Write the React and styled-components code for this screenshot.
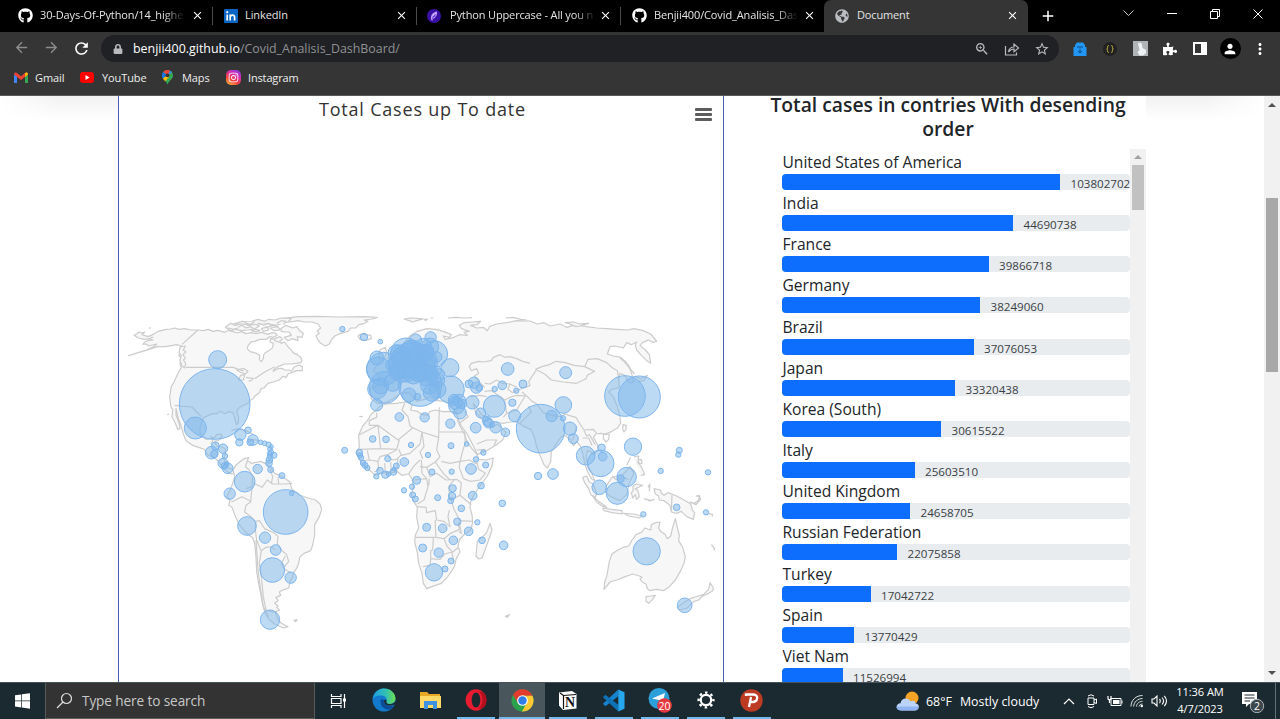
import React from "react";
import styled, { createGlobalStyle } from "styled-components";
import { FaGithub, FaInstagram, FaPuzzlePiece, FaLock, FaGlobeAmericas } from "react-icons/fa";
import { MdOutlineZoomIn, MdStarBorder, MdArrowBack, MdArrowForward, MdRefresh, MdClose, MdAdd, MdMoreVert, MdPerson } from "react-icons/md";

const GlobalStyle = createGlobalStyle`
  * { box-sizing: border-box; }
  body { margin: 0; overflow: hidden; font-family: "Open Sans", "Noto Sans", sans-serif; background: #fff; }
  svg { display: block; flex: none; }
`;

const Screen = styled.div`
  width: 1280px;
  height: 719px;
  display: flex;
  flex-direction: column;
  overflow: hidden;
`;

/* ---------- browser chrome ---------- */
const TabStrip = styled.div`
  height: 32px;
  flex: none;
  background: #000;
  display: flex;
`;
const Tab = styled.div`
  width: ${(p) => p.$w}px;
  flex: none;
  height: 32px;
  padding: 0 0 1px ${(p) => p.$pad}px;
  display: flex;
  align-items: center;
  color: #e4e4e4;
  background: ${(p) => (p.$active ? "#353535" : "#000")};
  border-radius: ${(p) => (p.$active ? "7px 7px 0 0" : "0")};
`;
const TabTitle = styled.div`
  width: ${(p) => p.$w}px;
  flex: none;
  margin-left: ${(p) => p.$ml || 7}px;
  white-space: nowrap;
  overflow: hidden;
  font-size: 11px;
  line-height: 16px;
  padding-bottom: 1px;
  letter-spacing: ${(p) => p.$ls || 0}px;
  mask-image: ${(p) => (p.$fade ? "linear-gradient(90deg, #000 85%, transparent 100%)" : "none")};
`;
const TabClose = styled.div`
  width: 14px;
  margin-left: ${(p) => p.$gap}px;
  color: #fff;
`;
const TabDivider = styled.div`
  width: 1px;
  flex: none;
  height: 18px;
  margin-top: 7px;
  background: #4a4a4a;
`;
const WindowButtons = styled.div`
  display: flex;
  margin-left: 50px;
  height: 27px;
  align-items: center;
`;
const WindowButton = styled.div`
  width: 43px;
  flex: none;
  display: flex;
  justify-content: center;
  color: #fff;
`;
const NewTab = styled.div`
  padding: 7px 0 0 11px;
  color: #fff;
`;
const Toolbar = styled.div`
  height: 33px;
  flex: none;
  background: #353535;
  display: flex;
  align-items: center;
  color: #fff;
`;
const NavButton = styled.div`
  width: 30px;
  display: flex;
  justify-content: center;
  color: ${(p) => (p.$dim ? "#8d8d8d" : "#fff")};
`;
const Nav = styled.div`
  display: flex;
  padding: 0 5px 0 6px;
`;
const AddressBar = styled.div`
  width: 958px;
  flex: none;
  height: 27px;
  border-radius: 14px;
  background: #202124;
  display: flex;
  align-items: center;
  padding: 0 2px 0 12px;
  color: #b9babc;
`;
const Url = styled.div`
  flex: 1;
  margin-left: 10px;
  font-size: 12.4px;
  letter-spacing: 0px;
  color: #8f9194;
  span { color: #fff; }
`;
const UrlAction = styled.div`
  width: 30px;
  display: flex;
  justify-content: center;
`;
const Extensions = styled.div`
  display: flex;
  margin-left: 6px;
`;
const Extension = styled.div`
  width: 30px;
  flex: none;
  height: 22px;
  display: flex;
  align-items: center;
  justify-content: center;
`;
const Avatar = styled.div`
  width: 21px;
  height: 21px;
  border-radius: 50%;
  background: #000;
  display: flex;
  align-items: center;
  justify-content: center;
`;
const Bookmarks = styled.div`
  height: 31px;
  flex: none;
  background: #353535;
  border-bottom: 1px solid #5a5a5a;
  display: flex;
  padding: 0 0 5px 14px;
  align-items: center;
`;
const Bookmark = styled.div`
  width: ${(p) => p.$w}px;
  display: flex;
  align-items: center;
  gap: ${(p) => p.$gap || 7}px;
  color: #eee;
  font-size: 11px;
  letter-spacing: ${(p) => p.$ls || 0}px;
  white-space: nowrap;
`;

/* ---------- page ---------- */
const Page = styled.main`
  height: 586px;
  flex: none;
  display: flex;
  background: #fff;
  overflow: hidden;
`;
const Gutter = styled.div`
  width: 118px;
  height: 40px;
  background: linear-gradient(#f1f1f1, #fff 60%);
  mask-image: linear-gradient(${(p) => (p.$flip ? "270deg" : "90deg")}, transparent, #000 50%);
`;
const ChartCard = styled.section`
  width: 606px;
  border: solid #4a5fb4;
  border-width: 0 1px;
`;
const ChartHeader = styled.div`
  height: 34px;
  display: flex;
  padding-left: 200px;
`;
const ChartTitle = styled.h2`
  margin: 0;
  width: 375px;
  font-weight: 400;
  font-size: 18px;
  line-height: 27px;
  letter-spacing: 0.8px;
  color: #333;
  white-space: nowrap;
`;
const MenuIcon = styled.div`
  width: 19px;
  padding: 12px 1px 0;
  display: flex;
  flex-direction: column;
  gap: 2px;
  i { height: 3px; border-radius: 1px; background: #5c5c5c; }
`;
const Ranking = styled.section`
  width: 422px;
  display: flex;
  flex-direction: column;
`;
const RankingTitle = styled.h4`
  margin: -3px 0 0;
  padding-left: 26px;
  height: 56px;
  text-align: center;
  font-size: 19.3px;
  line-height: 24px;
  font-weight: 600;
  letter-spacing: 0;
  color: #212529;
`;
const ScrollBox = styled.div`
  display: flex;
  height: 533px;
  overflow: hidden;
`;
const Rows = styled.div`
  width: 406px;
  padding-left: 58px;
`;
const Row = styled.div`
  height: 41.17px;
`;
const Country = styled.div`
  height: 25px;
  padding-left: 0.5px;
  line-height: 27px;
  font-size: 15.6px;
  letter-spacing: 0;
  color: #212529;
  white-space: nowrap;
`;
const Track = styled.div`
  height: 16px;
  border-radius: 4px;
  background: #e9ecef;
  display: flex;
  overflow: hidden;
`;
const Fill = styled.div`
  flex: none;
  background: #0d6efd;
`;
const Count = styled.div`
  margin-left: 10.5px;
  line-height: 20px;
  font-size: 11.6px;
  color: #3a3f44;
`;
const Scrollbar = styled.div`
  width: 16px;
  background: #f1f1f1;
  display: flex;
  flex-direction: column;
  align-items: center;
`;
const Arrow = styled.div`
  margin: ${(p) => (p.$down ? "0 0 7px" : `${p.$top}px 0 0`)};
  border: 4px solid transparent;
  border-top-width: ${(p) => (p.$down ? 4 : 0)}px;
  border-bottom-width: ${(p) => (p.$down ? 0 : 4)}px;
  border-top-color: ${(p) => (p.$down ? "#505050" : "transparent")};
  border-bottom-color: ${(p) => (p.$down ? "transparent" : p.$c || "#505050")};
`;
const Thumb = styled.div`
  width: 12px;
  height: ${(p) => p.$h}px;
  margin-top: ${(p) => p.$top}px;
  background: ${(p) => p.$c};
`;
const Spacer = styled.div`
  flex: 1;
`;

/* ---------- taskbar ---------- */
const Taskbar = styled.footer`
  height: 37px;
  flex: none;
  background: #1b2a30;
  border-top: 1px solid #46545a;
  display: flex;
  padding-right: 4px;
  color: #fff;
`;
const Start = styled.div`
  width: 45px;
  flex: none;
  display: flex;
  align-items: center;
  justify-content: center;
`;
const Search = styled.div`
  width: 270px;
  flex: none;
  background: #333;
  border: 1px solid #5b5b5b;
  border-width: 0 1px 1px;
  display: flex;
  align-items: center;
  padding-left: 10px;
  gap: 9px;
  color: #c8c8c8;
  font-size: 13.6px;
  letter-spacing: -0.1px;
`;
const TaskButton = styled.div`
  width: ${(p) => p.$w || 45.9}px;
  flex: none;
  display: flex;
  align-items: center;
  justify-content: center;
  background: ${(p) => (p.$active ? "#49575c" : "transparent")};
  box-shadow: ${(p) => (p.$active ? "inset 0 -2px #76b9ed" : "none")};
`;
const Running = styled.div`
  height: 36px;
  width: 38px;
  display: flex;
  align-items: center;
  justify-content: center;
  border-bottom: ${(p) => (p.$on ? "2px solid #76b9ed" : "2px solid transparent")};
`;
const Weather = styled.div`
  width: 150px;
  display: flex;
  align-items: center;
  font-size: 12.4px;
  white-space: nowrap;
  span { margin-left: 6px; }
  span + span { margin-left: 8px; }
`;
const Tray = styled.div`
  display: flex;
  margin-left: 12px;
`;
const TrayIcon = styled.div`
  width: 22.6px;
  display: flex;
  align-items: center;
  justify-content: center;
`;
const Clock = styled.div`
  width: 58px;
  text-align: center;
  font-size: 11.1px;
  line-height: 17px;
  letter-spacing: -0.1px;
  white-space: nowrap;
`;
const Notices = styled.div`
  width: 47px;
  border-right: 1px solid #617075;
  display: flex;
  align-items: center;
  padding-left: 12px;
`;

/* ---------- map ---------- */
const Land = styled.path`
  fill: ${(p) => (p.$line ? "none" : "#f7f7f7")};
  stroke: #cccccc;
  stroke-width: 3.6px;
  stroke-linejoin: round;
`;
const Bubble = styled.circle`
  fill: #7cb5ec;
  fill-opacity: 0.5;
  stroke: #7cb5ec;
  stroke-width: 3px;
`;

const americas = [
  "M32,167 L60,158 85,150 108,140 116,132 104,135 92,138 84,132 75,133 80,126 88,122 105,120 96,116 78,118 62,114 48,106 56,102 62,96 72,99 80,96 72,104 90,110 104,104 118,95 132,91 145,88 158,87 170,84 184,88 200,86 220,90 240,90 256,92 270,88 286,94 300,91 320,97 332,91 345,95 358,99 370,95 384,101 400,98 414,101 430,97 450,103 462,98 472,99 478,106 466,112 455,110 445,118 425,118 410,124 400,125 390,137 388,146 396,155 410,158 420,163 425,165 424,178 430,185 436,176 437,164 442,158 455,150 464,142 466,130 456,126 458,116 475,118 490,130 500,126 506,135 510,140 520,150 525,158 538,164 548,172 552,182 548,188 520,192 500,192 480,200 470,206 465,214 480,206 492,205 500,210 512,210 520,213 528,202 542,195 553,200 553,212 535,212 510,222 505,232 494,229 484,240 466,246 450,250 438,264 430,265 424,278 412,287 405,296 398,300 390,310 372,318 362,325 356,334 362,352 361,370 355,374 350,352 344,338 334,335 320,341 306,334 296,342 285,340 272,346 258,352 252,364 246,382 246,396 255,410 264,418 276,417 290,412 296,404 310,402 312,410 304,420 290,424 296,438 312,441 322,446 322,460 318,476 322,492 332,504 348,510 352,520 340,522 326,514 312,500 302,484 286,472 270,465 257,447 244,443 224,436 204,422 196,402 190,380 180,352 174,325 174,345 184,372 186,386 179,388 172,370 162,350 164,330 158,318 155,290 160,260 168,246 175,230 184,212 190,203 186,190 190,174 182,166 194,158 186,148 190,138 176,134 160,137 142,140 118,140 100,146Z",
  "M480,62 L500,55 540,50 600,49 660,51 740,50 778,52 762,57 738,60 750,64 740,70 722,74 714,84 698,84 690,94 668,100 650,108 640,120 634,132 622,138 608,130 600,120 594,108 604,100 597,92 608,84 600,72 582,66 560,66 540,62 515,66Z",
  "M322,82 L338,70 352,76 374,70 392,76 410,72 424,78 410,86 390,90 372,92 350,88 338,92Z",
  "M346,72 L372,64 396,66 420,58 440,64 452,58 470,60 490,54 520,55 510,66 492,70 474,76 455,72 430,72 400,74 370,72Z",
  "M430,86 L448,80 452,90 436,94ZM456,84 L480,80 486,90 468,92ZM400,92 L416,88 426,92 414,96Z",
  "M360,82 L372,76 384,84 398,80 408,86M330,84 L346,88 360,84M420,68 L436,76 450,70 462,78M476,70 L490,62 504,64 496,74M380,68 L396,74 410,64",
  "M488,86 L504,76 524,84 536,80 545,92 556,100 552,112 538,110 540,122 522,116 510,122 498,112 520,106 514,96 500,96 490,94Z",
  "M470,116 L486,110 494,118 482,126 470,122ZM440,84 L466,76 476,80",
  "M187,140 L202,138 196,150 204,156 195,164 202,174 196,180 203,190 200,204 192,198 186,180 190,166 183,158Z",
  "M148,344 L153,342M92,84 L99,84M98,112 L106,112",
  "M345,510 L355,494 365,486 378,476 392,473 388,482 400,490 428,484 450,494 462,508 470,520 490,528 515,545 522,568 545,585 570,594 592,600 606,612 611,628 604,650 590,674 590,705 584,735 578,752 558,760 545,772 542,790 536,805 526,818 524,832 516,845 512,864 490,872 484,876 488,886 474,892 480,902 470,910 480,918 476,922 484,930 472,936 480,958 490,970 510,980 496,984 470,972 452,958 440,936 434,914 428,880 422,850 416,816 414,770 410,730 404,714 382,697 364,674 350,644 342,622 332,616 336,600 326,590 336,572 344,550 350,530Z",
  "M528,961 L537,959 533,965Z",
];
const americaLines = [
  "M240,90 L192,133M204,202 L346,202 362,209 378,213 M170,316 L196,319 222,321 236,336 250,350",
  "M356,210 L376,205 390,214 382,222 366,216ZM362,240 L368,226 380,224 376,240ZM384,232 L408,236 M392,244 L404,239M410,236 L440,216 470,200",
  "M278,408 L286,418 278,432",
  "M388,484 L382,500 394,510 404,530 402,560 384,566 M402,560 L398,606 384,616 380,636 396,648 412,664 424,662 440,686 470,700 480,710 478,730 490,750 506,764 512,784 500,800 M340,606 L360,596 372,590 398,604 M413,664 L412,690 416,720 424,740 430,752 444,742 462,740 470,750 M430,752 L424,790 430,830 436,890 444,930 470,938 M404,548 L432,562 448,540 464,552 500,552 522,550 M456,508 L464,530 460,552 M480,530 L482,552 M502,768 L490,790 498,806 520,820 M414,720 L420,810 428,870 436,920 452,950",
  "M340,392 L362,386 384,392 404,402M392,426 L405,418 424,422",
];

const africaEurasia = [
  "M148,320 L162,313 180,311 200,310 224,306 240,308 246,318 242,330 262,334 276,343 292,346 300,334 316,330 340,335 362,334 380,340 388,352 382,360 392,382 404,404 412,426 426,446 440,462 446,478 468,480 490,474 486,498 472,528 450,558 432,584 422,606 420,622 426,644 428,668 422,690 404,702 388,720 384,738 390,756 378,778 374,798 362,818 350,834 334,850 314,857 290,866 280,850 276,820 266,790 262,758 254,726 256,706 266,684 260,650 262,622 250,602 244,584 250,560 246,536 236,522 216,526 200,514 180,520 156,518 136,526 118,510 98,494 88,474 80,458 88,440 86,406 98,378 112,362 124,342 140,330Z",
  "M480,670 L486,690 478,714 468,742 456,774 446,777 438,768 440,744 442,724 456,712 470,698Z",
  "M224,126 L240,108 262,94 290,86 316,88 340,94 364,104 358,112 340,108 346,118 372,112 388,104 412,106 402,96 418,94 394,86 388,76 402,68 430,66 452,64 440,74 422,76 440,84 460,82 472,92 478,80 500,72 530,68 560,62 600,63 622,72 642,68 660,78 690,72 710,82 738,74 770,80 800,84 830,86 860,88 894,90 912,86 940,92 962,102 972,114 980,124 968,127 955,120 938,128 930,136 946,150 958,164 962,190 950,182 934,166 920,150 916,136 920,126 904,134 890,128 880,144 856,138 840,140 832,162 850,168 872,172 888,186 898,200 906,224 912,244 900,250 890,238 884,226 870,220 866,240 868,262 846,268 836,276 850,290 862,320 870,350 872,370 862,384 846,394 826,402 812,400 798,402 790,412 802,432 804,450 792,464 780,454 772,452 768,474 774,498 786,520 794,542 784,536 772,514 764,490 758,460 752,440 740,424 730,438 722,420 704,406 694,410 676,436 664,456 662,486 652,504 642,494 630,466 620,440 612,408 602,388 584,380 562,366 540,366 520,370 494,366 472,352 456,346 442,326 430,310 436,334 450,350 470,378 490,380 502,372 522,390 528,398 518,420 500,434 470,452 442,464 436,450 424,426 410,400 394,378 384,356 380,340 362,318 346,304 320,302 300,290 284,298 260,304 240,280 216,278 190,296 166,308 144,312 124,296 120,262 150,256 146,226 130,212 150,180 190,170 206,150Z",
  "M84,108 L92,102 108,104 122,106 124,116 106,122 90,118ZM150,150 L166,142 170,160 160,180 146,176Z",
  "M222,57 L240,54 262,55 280,57 262,61 248,66 236,61ZM284,58 L292,57 286,62ZM302,54 L310,54M354,54 L380,52 400,54 426,53 M526,54 L548,52 572,58 590,60 M706,68 L730,66 750,72 776,70 750,78 738,80 720,72Z",
  "M870,174 L882,184 898,204 914,222 M912,228 L932,236 952,226 942,242 924,244 M88,349 L98,350",
  "M879,374 L889,376 888,388 882,396 878,388Z",
  "M912,470 L926,468 924,488 934,500 944,524 932,526 M890,496 L902,472 M924,480 L934,478 936,490 928,492Z",
  "M758,532 L770,528 778,546 790,552 800,580 796,592 782,584 776,566 764,548Z",
  "M788,588 L806,604 830,622 816,618 800,606ZM818,624 L844,628 876,632 876,642 846,638 822,632ZM880,640 L912,642 936,648 928,654 896,648Z",
  "M828,560 L844,534 880,522 900,500 912,520 898,548 890,584 870,602 842,590 826,576Z",
  "M908,560 L918,552 938,556 926,562 916,566 924,572 928,590 920,598 916,584 908,594 904,578 910,572Z",
  "M954,562 L960,552 958,574M942,596 L962,602 974,598M960,604 L950,598",
  "M972,566 L992,570 994,580 1002,586 1014,578 1040,588 1062,600 1082,612 1088,632 1094,638 1090,658 1070,650 1054,634 1040,640 1024,636 1020,616 1002,602 988,600 986,588 976,582ZM1080,606 L1094,610 1106,600 1108,590 1098,588 1108,586 1112,598 1098,614Z",
  "M822,868 L824,846 830,830 834,808 838,784 846,762 860,752 880,742 896,738 906,720 918,704 936,696 944,684 962,690 964,674 976,668 990,666 986,684 992,694 1006,704 1012,716 1022,708 1026,690 1036,656 1044,690 1048,706 1046,722 1058,742 1066,770 1062,790 1052,812 1036,840 1018,860 1000,872 980,868 960,872 952,866 948,852 936,846 930,836 936,832 928,828 908,822 880,832 860,840 840,846Z",
  "M948,890 L962,888 976,886 968,898 956,910 948,904Z",
  "M1140,848 L1150,864 1148,872 1136,880 1118,888 1106,900 1092,904 1072,924 1048,930 1042,922 1064,906 1080,896 1104,888 1120,884 1136,868Z",
  "M1144,734 L1154,746 1152,752M1136,640 L1148,644 1146,650M526,949 L538,944 532,952Z",
];
const africaEurasiaLines = [
  "M140,338 L140,352 118,362 118,376 M118,376 L144,376 204,420 248,384 M144,376 L152,446 88,448 M152,446 L200,448 208,420 M144,376 L88,404 M224,310 L216,330 234,350 240,378 250,384 276,396 326,412 328,322 M250,384 L276,396 270,432 240,460 214,466 206,448 M326,412 L320,450 330,470 316,486 290,502 270,500 M328,396 L404,396 M404,396 L406,430 400,446 390,484 360,490 334,484 M276,396 L282,440 270,456 278,476 M112,452 L118,480 96,482 M118,480 L144,484 150,470 172,464 200,450 M144,484 L146,510 132,516 M172,464 L186,480 200,478 212,466 M164,490 L166,518 M182,486 L184,518 M204,474 L200,514 M236,522 L250,500 270,480 M274,480 L276,520 290,536 250,540 M290,536 L294,560 282,600 262,612 M290,502 L300,530 320,520 348,540 380,538 394,548 M316,486 L340,520 360,540 M390,484 L388,502 400,536 422,544 450,540 466,520 446,508 440,484 M390,484 L418,480 440,492 M394,548 L390,586 360,600 356,560 372,540 M390,586 L424,614 M364,600 L372,628 390,662 428,664 M298,536 L296,556 M262,620 L288,622 290,638 316,632 320,660 342,664 360,680 354,650 358,630 M316,660 L316,680 318,712 280,712 256,712 M318,712 L342,716 362,700 388,688 384,668 M342,716 L352,740 368,756 386,742 M310,714 L308,750 302,752 302,776 330,778 344,762 366,756 M302,776 L300,796 278,800 M366,758 L372,790 M388,668 L394,700 386,694",
  "M600,190 L578,184 560,176 540,170 524,172 510,164 490,172 484,182 460,186 446,184 424,190 418,200 424,212 440,206 446,220 434,228 446,244 464,262 M464,250 L480,252 500,240 518,250 540,252 560,262 M540,252 L534,268 548,278 562,270 586,262 600,256 596,246 604,232 618,212 M464,274 L484,272 512,290 524,300 544,290 562,286 586,288 M418,290 L450,286 470,290 M524,300 L530,340 520,352 M530,340 L560,330 578,300 586,288 M440,432 L470,420 500,420 492,436 M390,368 L414,350 404,334 M440,450 L466,448 M616,208 L636,200 658,194 678,184 706,188 732,196 764,200 774,178 802,176 830,188 848,204 862,212 866,236 M616,208 L644,222 664,240 700,246 740,250 768,236 772,226 794,214 764,200 M576,276 L592,290 604,302 620,312 640,338 664,346 690,350 M570,370 L590,350 604,336 596,318 M690,350 L706,342 716,346 738,352 750,372 762,390 790,388 800,400 M740,378 L734,400 728,420 M762,392 L770,408 778,404 796,434 M758,414 L776,414 786,436 M820,404 L838,402 836,418 828,426 820,416Z",
  "M1026,586 L1024,632 M846,528 L860,540 880,532 894,538",
];

/* Bubble positions, [x, y, radius] in the same units as the outlines */
const americaBubbles = [
  [290, 312, 106], [299, 179, 27], [232, 384, 33], [281, 458, 19], [292, 438, 12], [315, 446, 14], [289, 462, 11], [321, 468, 8], [315, 490, 15], [329, 505, 16], [319, 498, 10], [326, 492, 7],
  [367, 404, 17], [390, 391, 10], [364, 427, 11], [405, 420, 16], [397, 427, 10], [428, 427, 7], [440, 430, 7], [452, 434, 8], [456, 448, 7], [459, 457, 8], [468, 466, 9], [456, 470, 8], [454, 480, 10], [453, 490, 10], [458, 509, 9], [460, 440, 6], [455, 461, 7],
  [419, 507, 14], [380, 545, 31], [335, 581, 17], [492, 527, 9], [521, 580, 7], [503, 636, 67], [387, 678, 28], [441, 713, 17], [473, 750, 16], [463, 810, 37], [518, 833, 17], [456, 959, 29],
];
const restBubbles = [
  [37, 87, 8], [102, 111, 11], [151, 125, 7], [140, 315, 18], [160, 207, 50], [165, 262, 48], [142, 267, 29], [145, 207, 36], [141, 174, 21], [270, 254, 65], [313, 162, 40], [320, 171, 16], [360, 203, 27], [362, 269, 41], [228, 160, 46], [257, 120, 18], [302, 112, 17], [300, 140, 26], [285, 160, 26], [200, 160, 26], [215, 195, 40], [235, 180, 50], [270, 190, 52], [280, 140, 25], [250, 225, 27], [210, 165, 30], [290, 185, 27], [280, 215, 28], [215, 215, 32], [255, 165, 38], [300, 220, 24], [320, 212, 14], [328, 222, 16], [322, 240, 22], [298, 256, 26], [306, 278, 26], [237, 285, 21], [262, 290, 10], [152, 258, 24], [188, 248, 26], [245, 155, 35], [286, 235, 22], [323, 269, 25],
  [205, 190, 30], [225, 200, 34], [250, 200, 36], [240, 150, 26], [265, 165, 30], [285, 200, 30], [230, 220, 26], [265, 222, 24], [200, 215, 24], [215, 170, 28], [290, 155, 22], [185, 195, 18], [305, 238, 18],
  [417, 252, 12], [432, 248, 17], [439, 263, 17], [448, 264, 10], [427, 307, 20], [372, 300, 17], [388, 302, 19], [380, 318, 24], [390, 338, 19], [376, 308, 20], [396, 312, 14], [452, 339, 15], [472, 364, 14], [475, 370, 14], [497, 382, 17], [526, 397, 13], [493, 319, 33], [533, 207, 19], [517, 256, 13], [494, 267, 8], [559, 272, 8], [579, 252, 12], [547, 308, 11], [554, 347, 18], [467, 356, 9], [486, 374, 8],
  [208, 351, 13], [284, 352, 14], [361, 371, 14], [437, 383, 16], [128, 417, 10], [168, 418, 10], [243, 435, 8], [294, 465, 8], [363, 437, 9], [410, 432, 7], [44, 451, 9], [88, 458, 10], [93, 473, 8], [99, 489, 8], [105, 496, 9], [112, 504, 8], [90, 466, 8], [139, 529, 8], [150, 512, 10], [166, 524, 11], [173, 476, 9], [190, 516, 10], [199, 498, 9], [223, 486, 13], [176, 522, 7], [192, 507, 6], [306, 516, 9], [365, 515, 8], [423, 507, 16], [438, 478, 8], [460, 458, 8], [467, 495, 9],
  [260, 541, 12], [246, 560, 8], [222, 571, 8], [248, 585, 9], [256, 597, 9], [323, 593, 9], [368, 565, 11], [366, 588, 11], [362, 602, 9], [428, 587, 13], [453, 557, 10], [394, 625, 10], [382, 665, 11], [416, 694, 13], [442, 667, 8], [290, 682, 12], [338, 685, 13], [370, 721, 13], [278, 744, 12], [326, 758, 14], [363, 783, 9], [345, 807, 9], [312, 817, 26], [456, 721, 10], [517, 610, 10], [521, 736, 13],
];
const asiaBubbles = [
  [62, 386, 73], [137, 218, 18], [130, 315, 25], [95, 348, 17], [129, 355, 8], [150, 386, 20], [160, 416, 15], [197, 467, 28], [242, 490, 40], [245, 443, 11], [248, 470, 13], [339, 440, 26], [315, 288, 61], [358, 291, 63], [54, 528, 11], [99, 522, 16], [422, 513, 8], [478, 451, 9], [475, 464, 8], [564, 517, 8], [320, 531, 29], [302, 536, 11], [292, 580, 33], [238, 562, 22], [370, 643, 8], [470, 622, 10], [558, 637, 8], [380, 754, 41], [494, 916, 22],
];

function WorldMap() {
  return (
    <svg width="604" height="520" viewBox="0 0 604 520">
      <g transform="translate(-1 170) scale(.33333)">
        {americas.map((d, i) => <Land key={i} d={d} />)}
        {americaLines.map((d, i) => <Land key={i} d={d} $line />)}
        <g transform="translate(636 0)">
          {africaEurasia.map((d, i) => <Land key={i} d={d} />)}
          {africaEurasiaLines.map((d, i) => <Land key={i} d={d} $line />)}
          {restBubbles.map(([x, y, r], i) => <Bubble key={i} cx={x} cy={y} r={r} />)}
        </g>
        {americaBubbles.map(([x, y, r], i) => <Bubble key={i} cx={x} cy={y} r={r} />)}
        <g transform="translate(1206 0)">
          {asiaBubbles.map(([x, y, r], i) => <Bubble key={i} cx={x} cy={y} r={r} />)}
        </g>
      </g>
    </svg>
  );
}

const countries = [
  ["United States of America", "103802702", 278],
  ["India", "44690738", 231],
  ["France", "39866718", 206.5],
  ["Germany", "38249060", 198],
  ["Brazil", "37076053", 191.5],
  ["Japan", "33320438", 173],
  ["Korea (South)", "30615522", 159],
  ["Italy", "25603510", 132.5],
  ["United Kingdom", "24658705", 128],
  ["Russian Federation", "22075858", 115],
  ["Turkey", "17042722", 88.5],
  ["Spain", "13770429", 72],
  ["Viet Nam", "11526994", 60.5],
];

/* ---------- icons ---------- */
const LinkedInIcon = () => (
  <svg width="14" height="14" viewBox="0 0 14 14"><rect width="14" height="14" rx="1" fill="#0a66c2" /><path d="M3.2 5.6V11.5M6.2 11.5V5.6M6.2 8.2C6.6 5.6 10.6 5.4 10.6 8.4V11.5" fill="none" stroke="#fff" strokeWidth="1.7" /><circle cx="3.2" cy="3.2" r="1.1" fill="#fff" /></svg>
);
const PurpleIcon = () => (
  <svg width="14" height="14" viewBox="0 0 14 14"><circle cx="7" cy="7" r="7" fill="#3a10a5" /><path d="M4 10.5C3.3 5.5 6.5 3.3 9.8 2.5C10.8 6.5 8 9.4 6 9.7L5.2 11.7" fill="#c9a6ff" /><path d="M5 10L8.5 5M5.6 7.8L9.3 6.8" stroke="#5525c8" strokeWidth=".8" /></svg>
);
const GmailIcon = () => (
  <svg width="14" height="11" viewBox="0 0 14 11"><path d="M0 2V11H3V4.5Z" fill="#4285f4" /><path d="M11 4.5V11H14V2Z" fill="#34a853" /><path d="M0 2.2C0 .2 2 0 3 1L7 4.2 11 1C12 0 14 .2 14 2.2L11 5 7 8 3 5Z" fill="#ea4335" /><path d="M11 1C12 0 14 .2 14 2.2L11 5Z" fill="#fbbc04" /></svg>
);
const YoutubeIcon = () => (
  <svg width="14" height="11" viewBox="0 0 14 11"><rect width="14" height="11" rx="3" fill="#f00" /><path d="M5.5 3V8L9.5 5.5Z" fill="#fff" /></svg>
);
const MapsIcon = () => (
  <svg width="11" height="15" viewBox="0 0 11 15"><path d="M5.5 15C5 11 0 9.500 0 5.500A5.500 5.500 0 0 1 11 5.500C11 9.500 6 11 5.500 15Z" fill="#34a853" /><path d="M1.200 2L5.500 5.500 8 .700A5.500 5.500 0 0 0 1.200 2Z" fill="#ea4335" /><path d="M1.200 2A5.500 5.500 0 0 0 .900 8.500L5.500 5.500Z" fill="#1a73e8" /><path d="M.9 8.500L5.500 5.300 7 7 3.200 11.300Z" fill="#fbbc04" /><path d="M8 .7A5.500 5.500 0 0 1 10 2.300L5.500 5.500Z" fill="#4285f4" /><circle cx="5.500" cy="5.300" r="1.900" fill="#353535" /></svg>
);
const Insta = styled.div`
  width: 15px;
  height: 15px;
  border-radius: 5px;
  color: #fff;
  display: flex;
  align-items: center;
  justify-content: center;
  background: linear-gradient(30deg, #ffc93a, #f4433e 35%, #d62bb0 65%, #7b3ff2);
`;
const ShareIcon = () => (
  <svg width="16" height="14" viewBox="0 0 16 14" fill="none" stroke="#b9babc" strokeWidth="1.200"><path d="M1.500 4V13H12.500V10.500M4.500 10C5 6.500 7 5 10 5V2L14.500 6 10 9.700V7C7.500 7 6 8 4.500 10Z" /></svg>
);
const WindowsIcon = () => (
  <svg width="15" height="16" viewBox="0 0 15 16" fill="#fff"><path d="M0 2.300L6.300 1.400V7.500H0ZM7 1.300L15 .2V7.500H7ZM0 8.300H6.300V14.500L0 13.600ZM7 8.300H15V15.700L7 14.600Z" /></svg>
);
const EdgeIcon = () => (
  <svg width="24" height="24" viewBox="0 0 24 24"><defs><linearGradient id="ea" x1="0" x2="1"><stop stopColor="#1b9de2" /><stop offset=".6" stopColor="#35c1b1" /><stop offset="1" stopColor="#6be04b" /></linearGradient></defs><circle cx="12" cy="12" r="11.500" fill="#1279cc" /><path d="M.6 11C2 3 8 .500 12 .500C19 .500 23.500 5.500 23.500 10.500C23.500 14 20.500 16 17.500 16C14.500 16 13.800 15 14.300 14C15.500 12 14.500 7.800 9.500 7.500C5 7.300 1.500 9 .6 11Z" fill="url(#ea)" /><path d="M8.500 13C8.500 19 13 22 18 21.500C20 20.800 21.500 19.300 22.500 17.600C20 19 12 18.500 12 12.300C9.500 10.500 8.500 11.500 8.500 13Z" fill="#0c4c96" /><path d="M23.800 15.500C21 18.500 12 19 12 12.200C12.600 11.500 14 11.500 14.600 12C14.200 13.500 13.500 16 18 16C20.500 16 22.500 15 23.500 13Z" fill="#1b2a30" /></svg>
);
const FolderIcon = () => (
  <svg width="21" height="18" viewBox="0 0 21 18"><path d="M0 1H7L9 3H20V17H0Z" fill="#e9a825" /><path d="M0 5H21V17H0Z" fill="#ffd968" /><path d="M4 10H17V18H13V14H8V18H4Z" fill="#3e92df" /></svg>
);
const OperaIcon = () => (
  <svg width="22" height="22" viewBox="0 0 22 22"><path fillRule="evenodd" d="M11 .3A10.500 10.700 0 1 0 11 21.700A10.500 10.700 0 1 0 11 .3ZM11 3.500C13.500 3.500 15.300 7 15.300 11S13.500 18.500 11 18.500 6.700 15 6.700 11 8.500 3.500 11 3.500Z" fill="#e81c31" /><path d="M13 2.800C19 4 19 18 13 19.200C20 21 21.600 14.500 21.400 11C21.600 7 19.500 1.500 13 2.800Z" fill="#b3101f" /></svg>
);
const ChromeIcon = () => (
  <svg width="23" height="23" viewBox="0 0 24 24"><circle cx="12" cy="12" r="11.500" fill="#2ba24c" /><path d="M12 12L2 6.200A11.500 11.500 0 0 1 22 6.200L22 7H12Z" fill="#e33b2e" /><path d="M12 7H22.400A11.500 11.500 0 0 1 11.300 23.500L16.500 14.500Z" fill="#fcc934" /><path d="M2 6.200L7.500 14.600 12 12Z" fill="#e33b2e" /><circle cx="12" cy="12" r="5.600" fill="#fff" /><circle cx="12" cy="12" r="4.400" fill="#2f7de8" /></svg>
);
const NotionIcon = () => (
  <svg width="20" height="21" viewBox="0 0 20 21"><path d="M1 2.500L14 1 18.500 4V18.500L5 20 1 15.500Z" fill="#fff" /><path d="M2 3L5.500 5.500V19M5.500 5.500L18 4.500" fill="none" stroke="#111" strokeWidth="1.200" /><text x="12" y="17" textAnchor="middle" fontFamily="Liberation Serif" fontWeight="700" fontSize="14" fill="#111">N</text></svg>
);
const VsCodeIcon = () => (
  <svg width="23" height="23" viewBox="0 0 24 24"><path d="M17 .500L1 15.500 3.500 18 17 7.500Z" fill="#1683cf" /><path d="M17 23.500L1 8.500 3.500 6 17 16.500Z" fill="#0d72b8" /><path d="M17 .500L23.500 3.500V20.500L17 23.500Z" fill="#27a7ed" /></svg>
);
const TelegramIcon = () => (
  <svg width="26" height="26" viewBox="0 0 26 26"><circle cx="12" cy="11.500" r="10.500" fill="#2c9fd9" /><path d="M5 11.500L18 6 16 14 11.500 13Z" fill="#fff" /><circle cx="17.500" cy="18.500" r="7.300" fill="#e5393f" /><text x="17.500" y="22.500" textAnchor="middle" fontFamily="Open Sans" fontSize="10.500" fill="#fff">20</text></svg>
);
const GearIcon = () => (
  <svg width="18" height="18" viewBox="0 0 18 18" fill="none" stroke="#fff"><circle cx="9" cy="9" r="5.200" strokeWidth="2.200" /><circle cx="9" cy="9" r="7.400" strokeWidth="2.400" strokeDasharray="2.500 3.311" strokeDashoffset="1.250" /></svg>
);
const PIcon = () => (
  <svg width="23" height="23" viewBox="0 0 23 23"><circle cx="11.500" cy="11.500" r="11.200" fill="#bd3b22" /><path d="M6 7V5.500H13.500C19 5.500 18 13 12.500 13H10M11 8L9 18" fill="none" stroke="#fff" strokeWidth="2.300" /></svg>
);
const TaskViewIcon = () => (
  <svg width="17" height="16" viewBox="0 0 17 16" fill="none" stroke="#fff" strokeWidth="1.200"><path d="M1.500 1V3.500H11V1M1.500 15V12.500H11V15M1.500 5.500H11V10.500H1.500ZM14.500 1V15" /><path d="M13 5.500H16V8.500H13Z" fill="#fff" stroke="none" /></svg>
);
const WeatherIcon = () => (
  <svg width="24" height="20" viewBox="0 0 24 20"><circle cx="16" cy="7" r="6.500" fill="#f7a325" /><path d="M5 19.500C-1 19-.5 12.500 4.500 12.300C5 6.500 12.500 5.800 14.500 10.500C16 9 20 10 19.500 12.500C24 12.500 24 19.500 19 19.500Z" fill="#bcd4fa" /><path d="M5 19.500C1 19 .2 17 .7 15.500H22.500C22.500 17.500 21.500 19.500 19 19.500Z" fill="#8fb4ef" /></svg>
);
const WifiIcon = () => (
  <svg width="14" height="14" viewBox="0 0 14 14" fill="none" stroke="#dfe3e4" strokeWidth="1"><path d="M1 12.500C1 6 6 1.500 12.500 1.500M3.700 12.500C3.700 8 8 4.500 12.500 4.500M6.500 12.500C6.500 9.500 9.500 7.300 12.500 7.300M9 12.500C9 11 11 10 12.500 10" /><circle cx="11.800" cy="12" r="1.200" fill="#fff" stroke="none" /></svg>
);
const SoundIcon = () => (
  <svg width="17" height="14" viewBox="0 0 17 14" fill="none" stroke="#fff" strokeWidth="1.100"><path d="M1 5H3L6 2V12L3 9H1ZM8.500 5C9.500 6 9.500 8 8.500 9M11 3.500C12.800 5.500 12.800 8.500 11 10.500M13.300 1.800C16 5 16 9 13.300 12.200" /></svg>
);

const tabs = [
  { icon: <FaGithub size={15} color="#fff" />, text: "30-Days-Of-Python/14_highe", w: 212, pad: 18, tw: 145, ls: -0.12, fade: true, gap: 6 },
  { icon: <LinkedInIcon />, text: "LinkedIn", w: 203, pad: 11, tw: 120, ls: -0.1, gap: 30 },
  { icon: <PurpleIcon />, text: "Python Uppercase - All you n", w: 203, pad: 10, ml: 9, tw: 146, ls: -0.14, fade: true, gap: 3 },
  { icon: <FaGithub size={15} color="#fff" />, text: "Benjii400/Covid_Analisis_Das", w: 203, pad: 11, tw: 144, ls: -0.12, fade: true, gap: 5 },
];

export default function App() {
  return (
    <Screen>
      <GlobalStyle />
      <TabStrip>
        {tabs.map((t, i) => (
          <React.Fragment key={t.text}>
            <Tab $w={t.w} $pad={t.pad}>
              {t.icon}
              <TabTitle $w={t.tw} $ls={t.ls} $ml={t.ml} $fade={t.fade}>{t.text}</TabTitle>
              <TabClose $gap={t.gap}><MdClose size={13} /></TabClose>
            </Tab>
            {i < 3 && <TabDivider />}
          </React.Fragment>
        ))}
        <Tab $w={204} $pad={11} $active>
          <FaGlobeAmericas size={14} color="#b9bcc0" />
          <TabTitle $w={120} $ml={8} $ls={-0.15}>Document</TabTitle>
          <TabClose $gap={29}><MdClose size={13} /></TabClose>
        </Tab>
        <NewTab><MdAdd size={18} /></NewTab>
        <WindowButtons>
          <WindowButton><svg width="11" height="7" viewBox="0 0 11 7"><path d="M.5 .5L5.500 5.500 10.500 .5" fill="none" stroke="#ccc" /></svg></WindowButton>
          <WindowButton><svg width="10" height="2"><path d="M0 .5H10" stroke="#fff" /></svg></WindowButton>
          <WindowButton><svg width="10" height="10" viewBox="0 0 10 10" fill="none" stroke="#fff"><path d="M.5 2.500H7.500V9.500H.5ZM2.500 2.500V.5H9.500V7.500H7.500" /></svg></WindowButton>
          <WindowButton><svg width="10" height="10" viewBox="0 0 10 10" stroke="#fff"><path d="M.5 .5L9.500 9.500M9.500 .5L.5 9.500" /></svg></WindowButton>
        </WindowButtons>
      </TabStrip>
      <Toolbar>
        <Nav>
          <NavButton $dim><MdArrowBack size={17} /></NavButton>
          <NavButton $dim><MdArrowForward size={17} /></NavButton>
          <NavButton><MdRefresh size={19} /></NavButton>
        </Nav>
        <AddressBar>
          <FaLock size={10} />
          <Url><span>benjii400.github.io</span>/Covid_Analisis_DashBoard/</Url>
          <UrlAction><MdOutlineZoomIn size={16} /></UrlAction>
          <UrlAction><ShareIcon /></UrlAction>
          <UrlAction><MdStarBorder size={16} /></UrlAction>
        </AddressBar>
        <Extensions>
          <Extension><svg width="14" height="14" viewBox="0 0 14 14"><path d="M2 3L4 .500H10L12 3V5H13.500V14H.5V5H2Z" fill="#2196f3" /><path d="M4 5H10M7 6.500V11M5 9L7 11 9 9" stroke="#0b4a86" fill="none" /></svg></Extension>
          <Extension><svg width="14" height="14" viewBox="0 0 14 14"><circle cx="7" cy="7" r="7" fill="#222" /><path d="M5.800 3.500Q4.300 3.500 4.600 5.200Q4.900 7 3.600 7Q4.900 7 4.600 8.800Q4.300 10.500 5.800 10.500M8.200 3.500Q9.700 3.500 9.400 5.200Q9.100 7 10.400 7Q9.100 7 9.400 8.800Q9.700 10.500 8.200 10.500" fill="none" stroke="#b5a642" /></svg></Extension>
          <Extension><svg width="15" height="15" viewBox="0 0 15 15"><rect width="15" height="15" fill="#b0b4b7" /><path d="M5 2.500C6 1 8.500 1.500 9 3.500L9.500 7 13 9V12L10 14.500H6.500L4.500 11 6.500 9Z" fill="#eef1f2" /></svg></Extension>
          <Extension><FaPuzzlePiece size={14} /></Extension>
          <Extension><svg width="14" height="13"><path d="M1 1H13V12H1Z" fill="none" stroke="#fff" strokeWidth="2" /><rect x="8" width="6" height="13" fill="#fff" /></svg></Extension>
          <Extension><Avatar><MdPerson size={16} /></Avatar></Extension>
          <Extension><MdMoreVert size={18} /></Extension>
        </Extensions>
      </Toolbar>
      <Bookmarks>
        <Bookmark $w={66} $ls={-0.1}><GmailIcon /> Gmail</Bookmark>
        <Bookmark $w={82} $gap={8} $ls={-0.1}><YoutubeIcon /> YouTube</Bookmark>
        <Bookmark $w={64} $gap={9} $ls={-0.1}><MapsIcon /> Maps</Bookmark>
        <Bookmark $w={90} $ls={-0.15}><Insta><FaInstagram size={11} /></Insta> Instagram</Bookmark>
      </Bookmarks>

      <Page>
        <Gutter />
        <ChartCard>
          <ChartHeader>
            <ChartTitle>Total Cases up To date</ChartTitle>
            <MenuIcon><i /><i /><i /></MenuIcon>
          </ChartHeader>
          <WorldMap />
        </ChartCard>
        <Ranking>
          <RankingTitle>Total cases in contries With desending<br />order</RankingTitle>
          <ScrollBox>
            <Rows>
              {countries.map(([name, count, w]) => (
                <Row key={name}>
                  <Country>{name}</Country>
                  <Track><Fill style={{ width: w }} /><Count>{count}</Count></Track>
                </Row>
              ))}
            </Rows>
            <Scrollbar>
              <Arrow $top={6} $c="#a3a3a3" />
              <Thumb $h={45} $top={6} $c="#c1c1c1" />
            </Scrollbar>
          </ScrollBox>
        </Ranking>
        <Gutter $flip />
        <Scrollbar>
          <Arrow $top={7} />
          <Thumb $h={174} $top={91} $c="#a8a8a8" />
          <Spacer />
          <Arrow $down />
        </Scrollbar>
      </Page>

      <Taskbar>
        <Start><WindowsIcon /></Start>
        <Search>
          <svg width="17" height="17" viewBox="0 0 17 17" fill="none" stroke="#ddd" strokeWidth="1.200"><circle cx="10.500" cy="6.500" r="5" /><path d="M7 10L1 16" /></svg>
          Type here to search
        </Search>
        <TaskButton $w={46.5}><TaskViewIcon /></TaskButton>
        <TaskButton><Running><EdgeIcon /></Running></TaskButton>
        <TaskButton><Running><FolderIcon /></Running></TaskButton>
        <TaskButton><Running $on><OperaIcon /></Running></TaskButton>
        <TaskButton $active><Running><ChromeIcon /></Running></TaskButton>
        <TaskButton><Running $on><NotionIcon /></Running></TaskButton>
        <TaskButton><Running $on><VsCodeIcon /></Running></TaskButton>
        <TaskButton><Running $on><TelegramIcon /></Running></TaskButton>
        <TaskButton><Running $on><GearIcon /></Running></TaskButton>
        <TaskButton><Running $on><PIcon /></Running></TaskButton>
        <Spacer />
        <Weather><WeatherIcon /><span>68°F</span><span>Mostly cloudy</span></Weather>
        <Tray>
          <TrayIcon><svg width="12" height="7" viewBox="0 0 12 7"><path d="M1 6L6 1 11 6" fill="none" stroke="#fff" strokeWidth="1.200" /></svg></TrayIcon>
          <TrayIcon><svg width="12" height="16" viewBox="0 0 12 16" fill="none" stroke="#fff"><path d="M2 5H8V11.500H2ZM8 7L10.500 6V10.500L8 9.500M2 3Q5 .500 8 3M2 13.500Q5 16 8 13.500" /></svg></TrayIcon>
          <TrayIcon><svg width="16" height="12" viewBox="0 0 16 12"><path d="M4 3.500H14V10.500H4ZM15 5.500V8.500" fill="none" stroke="#fff" /><path d="M6 5H12.500V9H6Z" fill="#fff" /><path d="M1 1V4Q2.500 5.500 4 4V1M2.500 4V8" fill="none" stroke="#fff" strokeWidth="1.200" /></svg></TrayIcon>
          <TrayIcon><WifiIcon /></TrayIcon>
          <TrayIcon><SoundIcon /></TrayIcon>
        </Tray>
        <Clock>11:36 AM<br />4/7/2023</Clock>
        <Notices>
          <svg width="24" height="24" viewBox="0 0 24 24"><path d="M1 3H16V15H8L5 18V15H1Z" fill="#fff" /><path d="M3.500 6H13.500M3.500 9H13.500M3.500 12H9" stroke="#1b2a30" /><circle cx="16" cy="17" r="6.700" fill="#3b474c" stroke="#aab1b4" /><text x="16" y="21" textAnchor="middle" fontFamily="Open Sans" fontSize="10.500" fill="#fff">2</text></svg>
        </Notices>
      </Taskbar>
    </Screen>
  );
}
